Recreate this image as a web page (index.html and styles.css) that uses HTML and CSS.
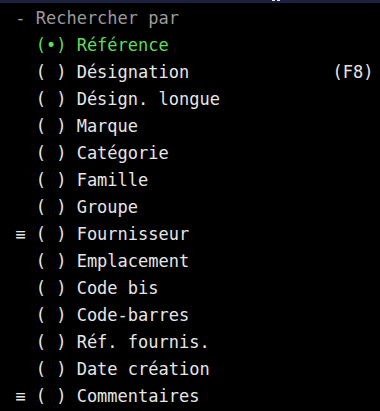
FILE: index.html
```html
<!DOCTYPE html>
<html lang="fr">
<head>
<meta charset="utf-8">
<link rel="stylesheet" href="styles.css">
</head>
<body>
<div class="topbar"><span class="mark"></span><span class="mark"></span></div>
<div class="screen">
<div class="row header"> - Rechercher par</div>
<div class="row selected">   (•) Référence</div>
<div class="row">   ( ) Désignation              (F8)</div>
<div class="row">   ( ) Désign. longue</div>
<div class="row">   ( ) Marque</div>
<div class="row">   ( ) Catégorie</div>
<div class="row">   ( ) Famille</div>
<div class="row">   ( ) Groupe</div>
<div class="row"> ≡ ( ) Fournisseur</div>
<div class="row">   ( ) Emplacement</div>
<div class="row">   ( ) Code bis</div>
<div class="row">   ( ) Code-barres</div>
<div class="row">   ( ) Réf. fournis.</div>
<div class="row">   ( ) Date création</div>
<div class="row"> ≡ ( ) Commentaires</div>
</div>
</body>
</html>
```
FILE: styles.css
```css
html, body {
  margin: 0;
  padding: 0;
  background: #000;
  width: 380px;
  height: 411px;
  overflow: hidden;
}
.topbar {
  height: 3px;
  background: #1b2242;
  display: flex;
  gap: 2px;
  padding-left: 272px;
}
.mark {
  width: 3px;
  height: 1px;
  background: #e8e8e8;
}
.screen {
  padding: 2px 0 0 5px;
  font-family: "DejaVu Sans Mono", monospace;
  font-size: 17px;
  line-height: 27px;
  color: #e6e6e6;
}
.row {
  white-space: pre;
}
.header {
  color: #9a9a9a;
}
.selected {
  color: #5fdc5a;
}
```
